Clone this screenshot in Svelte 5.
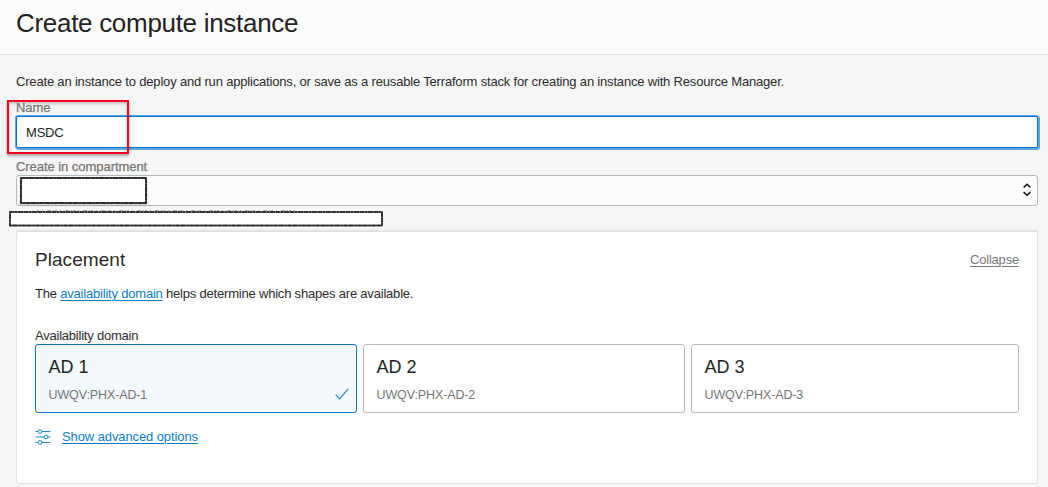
<script>
  const domains = [1, 2, 3];
  let selected = $state(1);
  let name = $state('MSDC');
</script>

<div class="page">
  <header><h1>Create compute instance</h1></header>
  <main>
    <p class="intro">Create an instance to deploy and run applications, or save as a reusable Terraform stack for creating an instance with Resource Manager.</p>
    <div class="field name-field">
      <label for="name">Name</label>
      <input id="name" bind:value={name} />
      <div class="highlight"></div>
    </div>
    <div class="field compartment">
      <label for="compartment">Create in compartment</label>
      <button id="compartment" class="select" aria-label="Compartment">
        <svg class="mask" width="127" height="27" viewBox="0 0 127 27">
          <rect x="1" y="1" width="125" height="25" fill="#fff" stroke="#444" stroke-width="1.8" />
          <rect x="1" y="1" width="125" height="25" fill="none" stroke="#222" stroke-width="1.5" stroke-dasharray="4 1 2 1 5 1" />
        </svg>
        <svg class="chevrons" width="8" height="14" viewBox="0 0 8 14" fill="none" stroke="#161616" stroke-width="1.5">
          <path d="M.6 4.4 4 1.2l3.4 3.2M.6 9.1 4 12.3l3.4-3.2" />
        </svg>
      </button>
    </div>
    <div class="path-row">
      <svg width="374" height="17" viewBox="0 0 374 17">
        <rect x="1" y="2" width="372" height="13.5" fill="#fff" stroke="#505050" stroke-width="1.7" />
        <rect x="1" y="2" width="372" height="13.5" fill="none" stroke="#222" stroke-width="1.5" stroke-dasharray="4 1 2 1 5 1" />
        <path d="M28 .7H290" stroke="#777" stroke-width=".8" stroke-dasharray="2 3 1 4 4 2 1 1" />
      </svg>
    </div>
    <section>
      <div class="section-head">
        <h2>Placement</h2>
        <a class="collapse" href="#collapse">Collapse</a>
      </div>
      <p class="help">The <a href="#domain">availability domain</a> helps determine which shapes are available.</p>
      <div class="group-label">Availability domain</div>
      <div class="cards">
        {#each domains as n}
          <button class="card" class:selected={selected === n} onclick={() => (selected = n)}>
            <span class="card-title">AD {n}</span>
            <span class="card-sub">UWQV:PHX-AD-{n}</span>
            {#if selected === n}
              <svg class="check" width="14" height="12" viewBox="0 0 14 12" fill="none" stroke="#1687cb" stroke-width="1.1">
                <path d="M.7 6.6 4.6 10.8 13.2.8" />
              </svg>
            {/if}
          </button>
        {/each}
      </div>
      <div class="advanced">
        <svg width="16" height="16" viewBox="0 0 16 16" fill="none" stroke="#1a8bcd" stroke-width="1">
          <path d="M.5 2.5h2.6M6.9 2.5h8.6M.5 8h8.6M12.9 8h2.6M.5 13.5h2.6M6.9 13.5h8.6" />
          <circle cx="5" cy="2.5" r="1.9" /><circle cx="11" cy="8" r="1.9" /><circle cx="5" cy="13.5" r="1.9" />
        </svg>
        <a href="#advanced">Show advanced options</a>
      </div>
    </section>
  </main>
</div>

<style>
  :global(body) { margin: 0; background: #f6f6f6; }
  .page { height: 487px; overflow: hidden; font: 13px/16px "Liberation Sans", Arial, sans-serif; color: #2b2b2b; }
  header { box-sizing: border-box; height: 55px; padding: 8px 16px; background: #fcfcfc; border-bottom: 1px solid #e0e0e0; }
  h1 { margin: 0; font-size: 26px; line-height: 31px; font-weight: 400; letter-spacing: -.3px; color: #222; }
  main { padding: 19px 10px 0 16px; }
  p { margin: 0; }
  .intro { white-space: nowrap; letter-spacing: -.18px; }
  .field { position: relative; }
  .name-field { margin-top: 10px; }
  label { display: block; height: 16px; color: #777; letter-spacing: -.05px; -webkit-text-stroke: .25px #777; }
  input { display: block; box-sizing: border-box; width: 100%; height: 32px; padding: 0 9px; border: 1px solid #0572ce; border-radius: 2px; outline: 0; background: #fff; box-shadow: 0 0 0 1px #60a5db, 1px 1px 0 1px #60a5db; font: inherit; letter-spacing: -.2px; color: #222; }
  .highlight { position: absolute; left: -9px; top: 0; width: 118px; height: 50px; border: 2px solid #fb0020; box-shadow: 0 2px 3px #0005, inset 0 2px 3px #0003; }
  .compartment { margin-top: 11px; }
  .select { display: flex; align-items: center; justify-content: space-between; box-sizing: border-box; width: 100%; height: 31px; padding: 0 6px 0 3px; border: 1px solid #b4b8be; border-radius: 3px; background: #fcfcfc; }
  .mask { filter: drop-shadow(0 1px 1px #0003); }
  .chevrons { position: relative; top: -1px; }
  .path-row { display: flex; height: 17px; margin: 4px 0 0 -7px; }
  section { box-sizing: border-box; height: 254px; margin-top: 3px; padding: 17px 18px 0; border: 1px solid #dfe2e6; border-top-width: 2px; border-radius: 3px; background: #fff; }
  .section-head { display: flex; justify-content: space-between; height: 23px; }
  h2 { margin: 0; font-size: 19px; line-height: 22px; font-weight: 400; letter-spacing: .05px; }
  a { color: #0a80c4; text-decoration: underline; text-underline-offset: 2px; text-decoration-thickness: 1px; }
  .collapse { color: #777; line-height: 22px; letter-spacing: -.2px; }
  .help { margin-top: 14px; letter-spacing: -.2px; }
  .group-label { margin-top: 26px; letter-spacing: -.22px; }
  .cards { display: grid; grid-template-columns: 322px 322px 328px; gap: 6px; }
  .card { position: relative; display: flex; flex-direction: column; align-items: flex-start; height: 69px; padding: 11px 12.5px; border: 1px solid #b4b8be; border-radius: 3px; background: #fff; font: inherit; text-align: left; }
  .card.selected { border-color: #0572bb; background: #f4f9fd; }
  .card-title { font-size: 18px; line-height: 22px; color: #222; }
  .card-sub { margin-top: 9px; color: #737373; font-size: 12.5px; line-height: 16px; letter-spacing: -.12px; }
  .check { position: absolute; right: 7px; bottom: 12px; }
  .advanced { display: flex; align-items: center; gap: 11px; height: 16px; margin-top: 16px; letter-spacing: -.1px; }
</style>
